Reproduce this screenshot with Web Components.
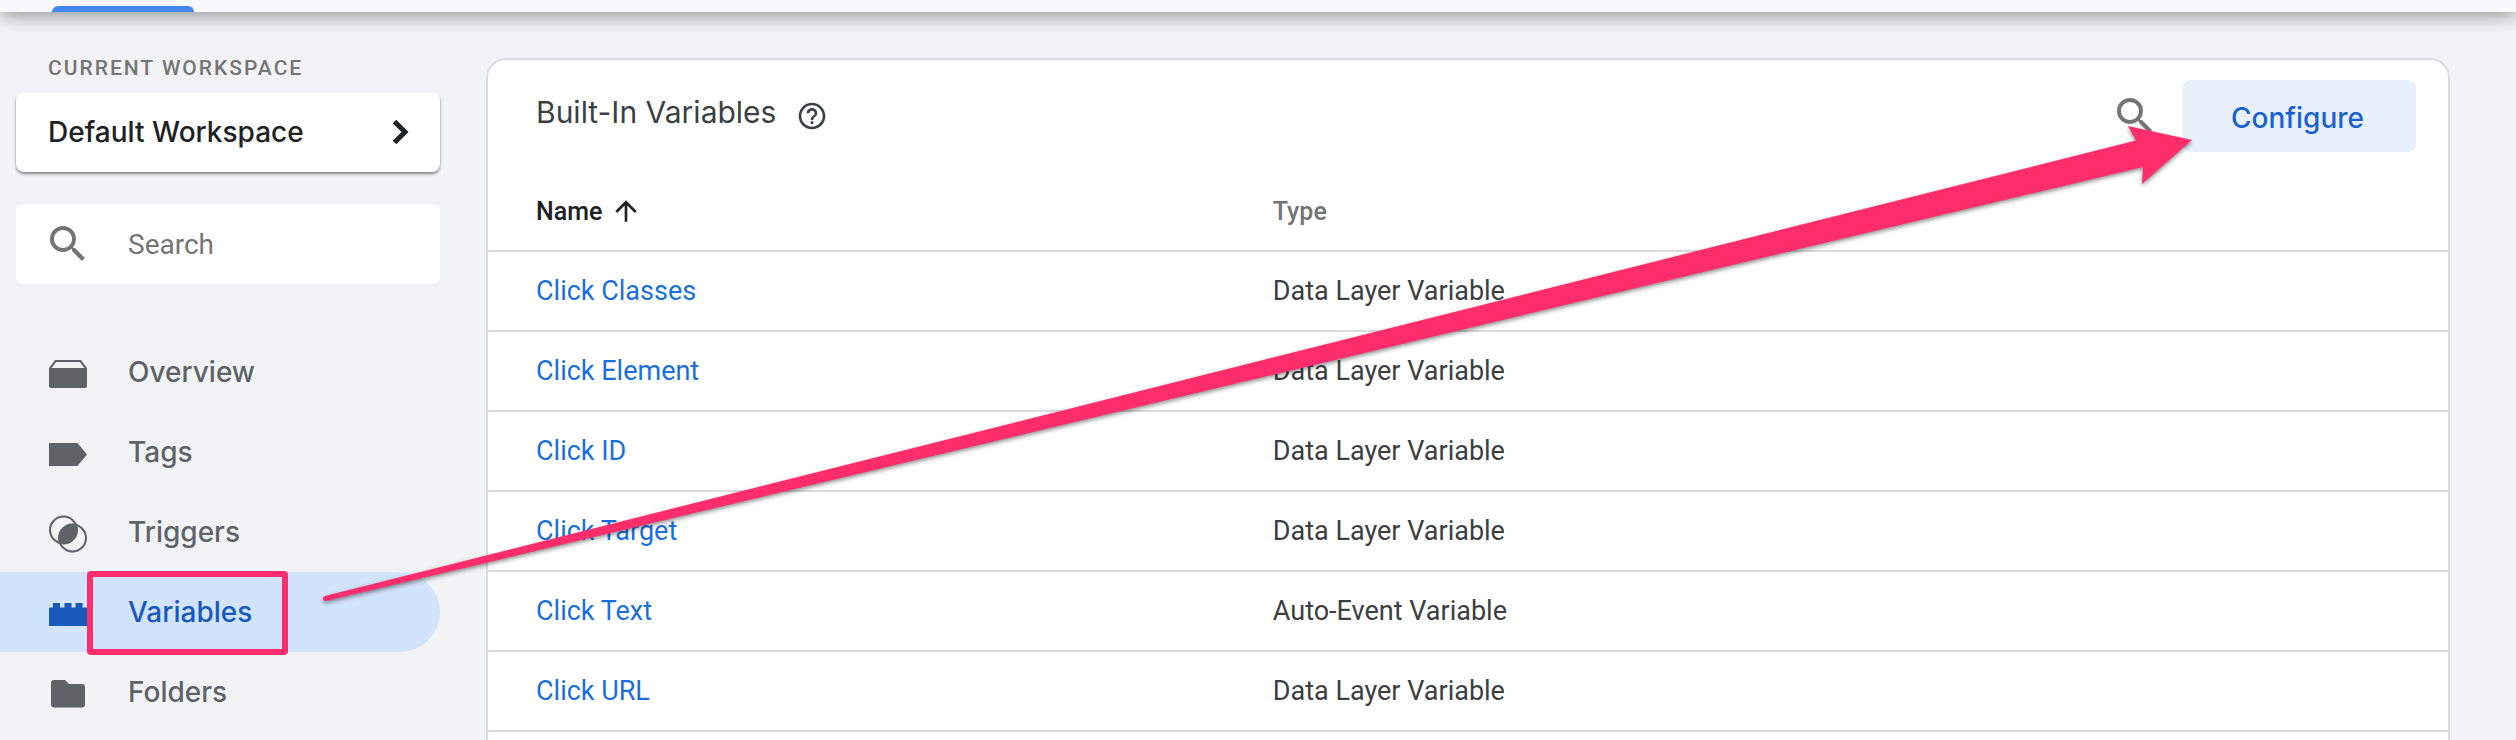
<!DOCTYPE html>
<html lang="en">
<head>
<meta charset="utf-8">
<title>Variables</title>
<style>
  body { margin: 0; background: #f1f3f4; font-family: Roboto, "Liberation Sans", sans-serif; }
</style>
</head>
<body>
<tm-app>
  <tm-sidebar slot="side" label="CURRENT WORKSPACE" workspace="Default Workspace">
    <tm-nav-item icon="overview">Overview</tm-nav-item>
    <tm-nav-item icon="tags">Tags</tm-nav-item>
    <tm-nav-item icon="triggers">Triggers</tm-nav-item>
    <tm-nav-item icon="variables" active>Variables</tm-nav-item>
    <tm-nav-item icon="folders">Folders</tm-nav-item>
  </tm-sidebar>
  <tm-variables-card>Built-In Variables</tm-variables-card>
  <tm-annotation slot="overlay"></tm-annotation>
</tm-app>

<script>
const ICONS = {
  search: '<path transform="scale(2)" d="M15.5 14h-.79l-.28-.27A6.471 6.471 0 0 0 16 9.5 6.5 6.5 0 1 0 9.5 16c1.61 0 3.09-.59 4.23-1.57l.27.28v.79l5 4.99L20.49 19l-4.99-5zm-6 0C7.01 14 5 11.99 5 9.5S7.01 5 9.5 5 14 7.01 14 9.5 11.99 14 9.5 14z"/>',
  chevron: '<path d="M18.500 13.500L29 24 18.500 34.500" fill="none" stroke="currentColor" stroke-width="5"/>',
  help: '<path transform="scale(2)" d="M11 18h2v-2h-2v2zm1-16C6.480 2 2 6.480 2 12s4.480 10 10 10 10-4.480 10-10S17.520 2 12 2zm0 18c-4.410 0-8-3.590-8-8s3.590-8 8-8 8 3.590 8 8-3.590 8-8 8zm0-14c-2.210 0-4 1.790-4 4h2c0-1.100.9-2 2-2s2 .9 2 2c0 2-3 1.750-3 5h2c0-2.250 3-2.500 3-5 0-2.210-1.790-4-4-4z"/>',
  up: '<path transform="scale(2)" d="M4 12l1.410 1.410L11 7.830V20h2V7.830l5.580 5.590L20 12l-8-8-8 8z"/>',
  overview: '<path d="M11 12H37L43 20V38Q43 40 41 40H7Q5 40 5 38V20ZM12 14L7.500 20H40.500L36 14Z" fill-rule="evenodd"/>',
  tags: '<path d="M5 15H33.500L43 26.500 33.500 38H5Z"/>',
  triggers: '<g fill="none" stroke="currentColor" stroke-width="2"><circle cx="19.500" cy="22" r="13.500"/><circle cx="28.500" cy="30" r="13.500"/></g><path d="M32 17A13.500 13.500 0 0 1 16 35A13.500 13.500 0 0 1 32 17Z"/>',
  variables: '<path d="M5 19.500H9V15H16V19.500H20.500V15H27.500V19.500H31.500V15H38.500V19.500H43V38H5Z"/>',
  folders: '<path d="M10 12H21L25 16H38Q41 16 41 19V36.500Q41 39.500 38 39.500H10Q7 39.500 7 36.500V15Q7 12 10 12Z"/>'
};
const icon = name => `<svg viewBox="0 0 48 48" fill="currentColor" aria-hidden="true">${ICONS[name]}</svg>`;

class TmElement extends HTMLElement {
  connectedCallback() {
    if (this.shadowRoot) return;
    const t = document.createElement('template');
    t.innerHTML = this.render();
    this.attachShadow({ mode: 'open' }).append(t.content.cloneNode(true));
  }
}

customElements.define('tm-app', class extends TmElement {
  render() {
    return `<style>
      :host { display: flex; flex-direction: column; position: relative; min-height: 100vh; overflow: hidden; }
      header { position: relative; z-index: 1; height: 12px; background: #f8f9fc; display: flex; align-items: flex-end; padding-left: 52px; box-shadow: 0 0 20px rgba(0,0,0,.65); }
      .tab { width: 142px; height: 6px; border-radius: 6px 6px 0 0; background: #4285f4; }
      .body { flex: 1; display: flex; gap: 46px; padding-right: 66px; }
      main { flex: 1; min-width: 0; display: flex; padding-top: 46px; }
      ::slotted(tm-variables-card) { flex: 1; min-width: 0; }
    </style>
    <header><div class="tab"></div></header>
    <div class="body"><slot name="side"></slot><main><slot></slot></main></div>
    <slot name="overlay"></slot>`;
  }
});

customElements.define('tm-sidebar', class extends TmElement {
  render() {
    return `<style>
      :host { display: block; flex: none; width: 440px; padding-top: 44px; box-sizing: border-box; }
      .label { padding-left: 48px; font-size: 21px; line-height: 24px; font-weight: 500; letter-spacing: 2px; color: #757575; }
      .box { display: flex; align-items: center; box-sizing: border-box; height: 80px; margin-left: 16px; background: #fff; border-radius: 8px; }
      button { width: calc(100% - 16px); margin-top: 12px; border: 0; padding: 0 16px 0 32px; justify-content: space-between; color: #202124; font: 500 28px Inter, sans-serif; box-shadow: 0 2px 3px rgba(0,0,0,.45); }
      .search { margin-top: 32px; padding: 0 28px; gap: 36px; color: #757575; }
      input { flex: 1; min-width: 0; border: 0; padding: 0; outline: 0; background: none; font: 28px Roboto, sans-serif; color: #202124; }
      input::placeholder { color: #757575; opacity: 1; }
      svg { flex: none; width: 48px; height: 48px; }
      nav { margin-top: 48px; }
    </style>
    <div class="label">${this.getAttribute('label')}</div>
    <button class="box" type="button"><span>${this.getAttribute('workspace')}</span>${icon('chevron')}</button>
    <div class="box search">${icon('search')}<input type="search" placeholder="Search" aria-label="Search"></div>
    <nav><slot></slot></nav>`;
  }
});

customElements.define('tm-nav-item', class extends TmElement {
  render() {
    return `<style>
      :host { display: block; }
      a { display: flex; align-items: center; gap: 36px; height: 80px; padding-left: 44px; border-radius: 0 40px 40px 0; color: #5f6368; font: 500 28px Inter, sans-serif; text-decoration: none; }
      :host([active]) a { background: #d2e3fc; color: #185abc; }
      svg { flex: none; width: 48px; height: 48px; }
    </style>
    <a href="#${this.getAttribute('icon')}">${icon(this.getAttribute('icon'))}<slot></slot></a>`;
  }
});

customElements.define('tm-variables-card', class extends TmElement {
  render() {
    const rows = [
      ['Click Classes', 'Data Layer Variable'],
      ['Click Element', 'Data Layer Variable'],
      ['Click ID', 'Data Layer Variable'],
      ['Click Target', 'Data Layer Variable'],
      ['Click Text', 'Auto-Event Variable'],
      ['Click URL', 'Data Layer Variable']
    ];
    return `<style>
      :host { display: block; box-sizing: border-box; background: #fff; border: 2px solid #dadce0; border-bottom: 0; border-radius: 20px 20px 0 0; }
      .bar { display: flex; align-items: flex-start; box-sizing: border-box; height: 112px; padding: 20px 32px 0 48px; }
      h2 { flex: 1; display: flex; align-items: flex-end; gap: 20px; margin: 12px 0 0; font: 400 30px/40px Inter, sans-serif; color: #3c4043; }
      .help { width: 32px; height: 32px; }
      button { border: 0; padding: 0; background: none; color: #757575; }
      .find { width: 48px; height: 72px; display: flex; align-items: center; margin-right: 24px; }
      .configure { height: 72px; padding: 4px 52px 0 48px; border-radius: 8px; background: #e8f0fb; color: #1a62cf; font: 500 28px Inter, sans-serif; }
      svg { display: block; width: 100%; }
      table { width: 100%; table-layout: fixed; border-collapse: separate; border-spacing: 0; }
      th, td { box-sizing: border-box; height: 80px; padding: 0 0 0 40px; border-bottom: 2px solid #dadcde; text-align: left; vertical-align: middle; font-size: 27px; color: #3c4043; }
      th { font-size: 25px; font-weight: 500; color: #757575; }
      th:first-child { width: 38%; color: #202124; }
      th:first-child, td:first-child { padding-left: 48px; }
      .sort { display: flex; align-items: center; gap: 8px; }
      .sort svg { width: 32px; }
      a { color: #1a6fe0; text-decoration: none; }
    </style>
    <div class="bar">
      <h2><slot></slot><span class="help">${icon('help')}</span></h2>
      <button class="find" type="button" aria-label="Search variables">${icon('search')}</button>
      <button class="configure" type="button">Configure</button>
    </div>
    <table>
      <thead><tr><th scope="col"><span class="sort">Name ${icon('up')}</span></th><th scope="col">Type</th></tr></thead>
      <tbody>${rows.map(([n, t]) => `<tr><td><a href="#">${n}</a></td><td>${t}</td></tr>`).join('')}</tbody>
    </table>`;
  }
});

customElements.define('tm-annotation', class extends TmElement {
  render() {
    return `<style>
      :host { position: absolute; top: 0; left: 0; z-index: 2; pointer-events: none; }
      svg { display: block; filter: drop-shadow(0 2px 2px rgba(0,0,0,.45)); }
      .frame { position: absolute; left: 87px; top: 571px; width: 201px; height: 84px; box-sizing: border-box; border: 6px solid #ff2d6c; border-radius: 4px; }
    </style>
    <svg width="2240" height="700" viewBox="0 0 2240 700" aria-hidden="true">
      <path fill="#ff2d6c" d="M325 596L2136 140.500 2128 126 2192 140 2142 184 2143 167 326 601Q323 601 323 598.500 323 596.500 325 596Z"/>
    </svg>
    <div class="frame"></div>`;
  }
});
</script>
</body>
</html>
